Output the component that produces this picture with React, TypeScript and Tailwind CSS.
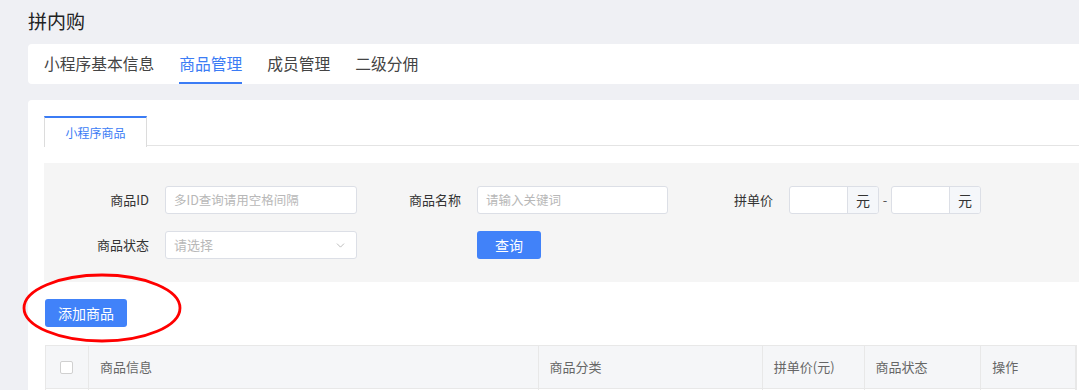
import { ChevronDown } from "lucide-react"

const topTabs = ["小程序基本信息", "商品管理", "成员管理", "二级分佣"]

const columns = [
    { label: "商品信息", w: "w-[451px]" },
    { label: "商品分类", w: "w-[225px]" },
    { label: "拼单价(元)", w: "w-[102px]" },
    { label: "商品状态", w: "w-[117px]" },
    { label: "操作", w: "w-[95px]" },
]

const PriceInput = () => (
    <div className="flex h-[28px] w-[90px] rounded-[3px] border border-[#dcdfe6] bg-white overflow-hidden">
        <div className="flex-1" />
        <div className="w-[31px] border-l border-[#dcdfe6] bg-[#f5f7fa] flex items-center justify-center text-[14px] text-[#333]">
            元
        </div>
    </div>
)

const App = () => {
    return (
        <div
            className="w-[1079px] h-[390px] overflow-hidden bg-[#eff0f4] pl-[28px]"
            style={{ fontFamily: '"Noto Sans CJK SC", "Noto Sans", sans-serif' }}
        >
            <div className="w-[1100px]">
                {/* Title */}
                <div className="h-[44px] pt-[8px] text-[19px] leading-[26px] text-[#222]">拼内购</div>

                {/* Top tabs */}
                <div className="h-[40px] bg-white rounded-[4px] flex items-stretch pl-[16px] gap-[25px]">
                    {topTabs.map((t, i) => (
                        <div
                            key={t}
                            className={
                                i === 1
                                    ? "flex items-center text-[15.75px] text-[#3b7cf5] border-b-2 border-[#3b7cf5] pt-[2px]"
                                    : "flex items-center text-[15.75px] text-[#444] border-b-2 border-transparent pt-[2px]"
                            }
                        >
                            {t}
                        </div>
                    ))}
                </div>

                {/* Main card */}
                <div className="mt-[16px] bg-white rounded-[4px] pl-[16px] pt-[16px] h-[300px]">
                    <div className="flex border-b border-[#e4e4e4] h-[30px]">
                        <div className="w-[103px] h-[31px] border-t-2 border-x border-t-[#3b7cf5] border-x-[#dcdcdc] bg-white text-[12px] text-[#3b7cf5] flex items-center justify-center">
                            小程序商品
                        </div>
                    </div>

                    {/* Filter */}
                    <div className="mt-[17px] h-[119px] bg-[#f5f5f5] pt-[23px] text-[13px] text-[#333]">
                        <div className="flex items-center h-[28px]">
                            <div className="w-[105px] text-right">商品ID</div>
                            <div className="ml-[16px] w-[192px] h-[28px] rounded-[3px] border border-[#dcdfe6] bg-white flex items-center px-[8px] text-[12.5px] text-[#b8b8b8]">
                                多ID查询请用空格间隔
                            </div>
                            <div className="w-[104px] text-right">商品名称</div>
                            <div className="ml-[16px] w-[191px] h-[28px] rounded-[3px] border border-[#dcdfe6] bg-white flex items-center px-[8px] text-[12.5px] text-[#b8b8b8]">
                                请输入关键词
                            </div>
                            <div className="w-[105px] text-right">拼单价</div>
                            <div className="ml-[16px] flex items-center">
                                <PriceInput />
                                <div className="w-[12px] text-center text-[#555]">-</div>
                                <PriceInput />
                            </div>
                        </div>
                        <div className="flex items-center h-[28px] mt-[17px]">
                            <div className="w-[105px] text-right">商品状态</div>
                            <div className="ml-[16px] w-[192px] h-[28px] rounded-[3px] border border-[#dcdfe6] bg-white flex items-center justify-between pl-[8px] pr-[9px] text-[13px] text-[#b8b8b8]">
                                请选择
                                <ChevronDown size={13} strokeWidth={1.2} className="text-[#999]" />
                            </div>
                            <div className="ml-[120px] w-[64px] h-[28px] rounded-[3px] bg-[#4182f9] text-white text-[14px] flex items-center justify-center">
                                查询
                            </div>
                        </div>
                    </div>

                    {/* Add button */}
                    <div className="relative mt-[17px] h-[28px]">
                        <div className="ml-[1px] w-[82px] h-[28px] rounded-[3px] bg-[#4182f9] text-white text-[14px] flex items-center justify-center">
                            添加商品
                        </div>
                        <svg className="absolute left-[-22px] top-[-26px]" width="162" height="72" viewBox="0 0 162 72">
                            <ellipse cx="80" cy="35" rx="78" ry="33" fill="none" stroke="#f00" strokeWidth="2.8" />
                        </svg>
                    </div>

                    {/* Table */}
                    <div className="mt-[18px] ml-[1px] border border-[#e8e8e8] w-[1032px]">
                        <div className="flex h-[42px] bg-[#f5f6f8] text-[13px] text-[#666]">
                            <div className="w-[43px] border-r border-[#e8e8e8] flex items-center justify-center">
                                <div className="w-[13px] h-[13px] rounded-[2px] border border-[#d0d0d0] bg-white" />
                            </div>
                            {columns.map((c) => (
                                <div key={c.label} className={`${c.w} border-r border-[#e8e8e8] flex items-center pl-[11px]`}>
                                    {c.label}
                                </div>
                            ))}
                        </div>
                        <div className="flex h-[20px] border-t border-[#e8e8e8]">
                            <div className="w-[43px] border-r border-[#e8e8e8]" />
                            {columns.map((c) => (
                                <div key={c.label} className={`${c.w} border-r border-[#e8e8e8]`} />
                            ))}
                        </div>
                    </div>
                </div>
            </div>
        </div>
    )
}

export default App
